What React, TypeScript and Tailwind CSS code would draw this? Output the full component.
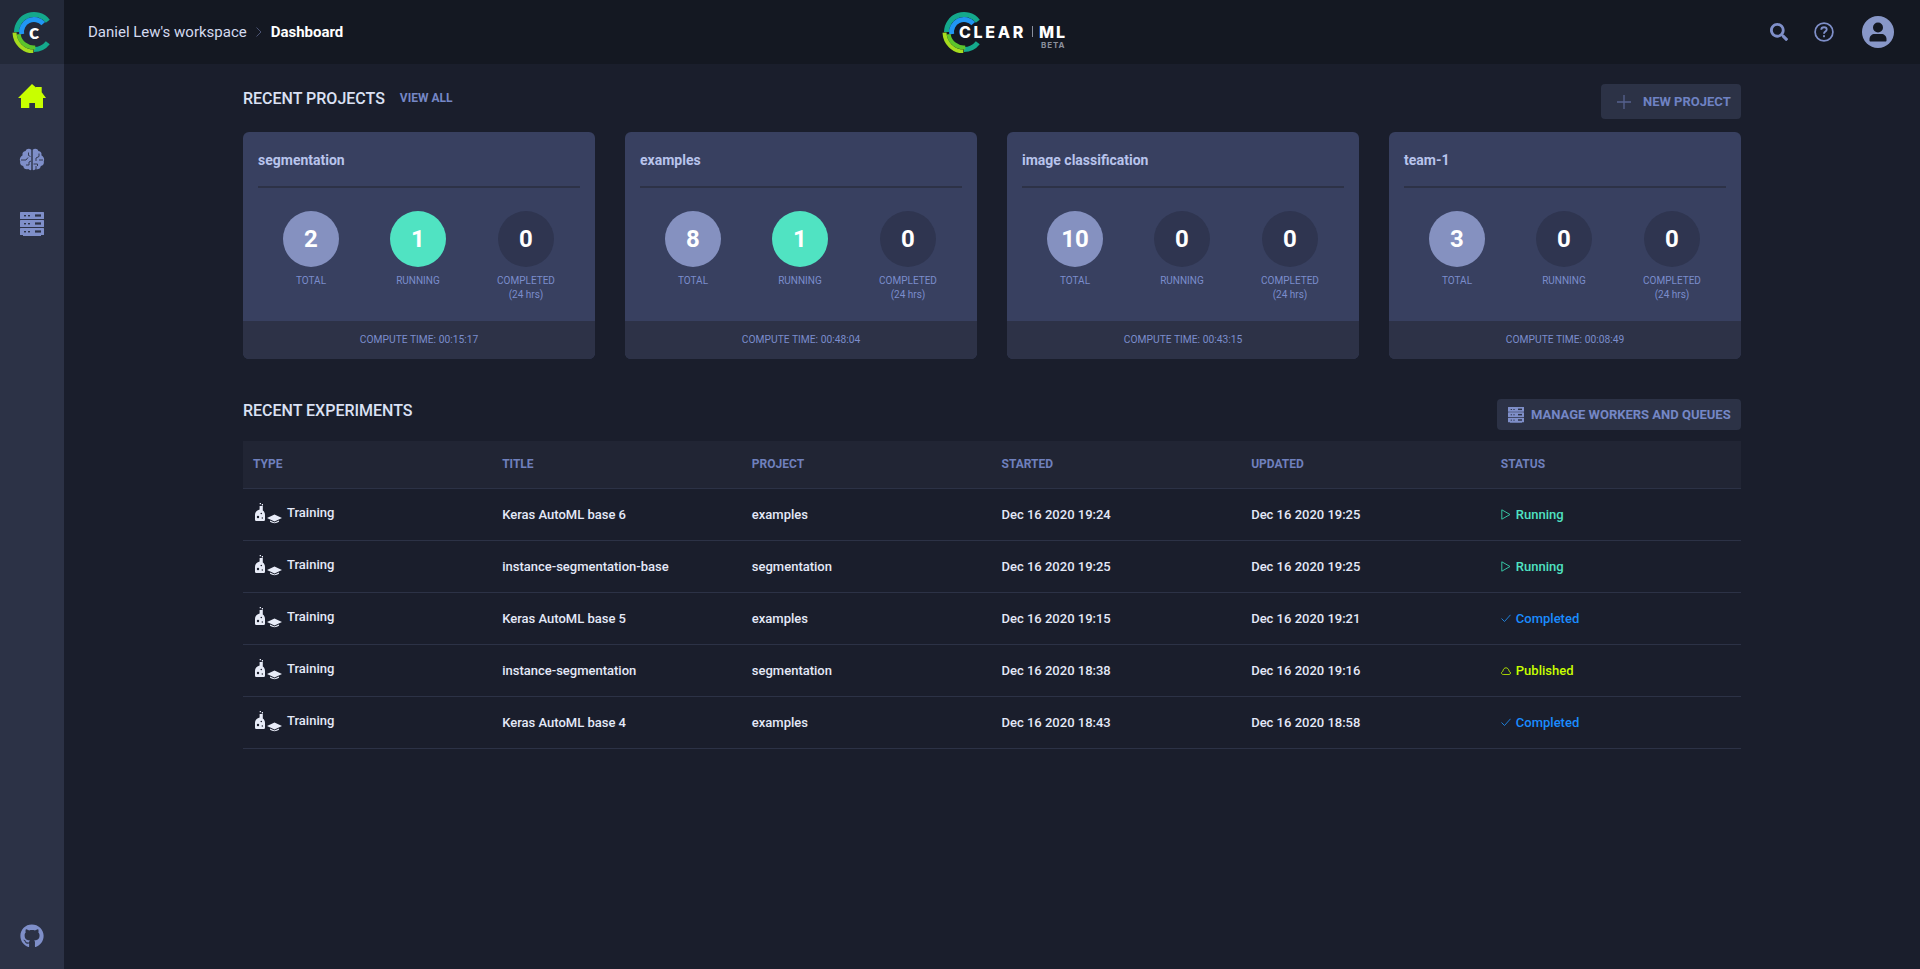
import { FaSearch, FaGithub } from "react-icons/fa";

const polar = (cx: number, cy: number, r: number, deg: number) => {
  const a = (deg * Math.PI) / 180;
  return `${(cx + r * Math.cos(a)).toFixed(2)} ${(cy + r * Math.sin(a)).toFixed(2)}`;
};
const arc = (cx: number, cy: number, r: number, from: number, to: number) =>
  `M${polar(cx, cy, r, from)} A${r} ${r} 0 ${Math.abs(to - from) > 180 ? 1 : 0} ${to > from ? 1 : 0} ${polar(cx, cy, r, to)}`;

function LogoMark({ size = 42 }: { size?: number }) {
  return (
    <svg width={size} height={size} viewBox="0 0 42 42" fill="none">
      <path d={arc(23, 21, 17.5, -38, -180)} stroke="#14a88c" strokeWidth="5" />
      <path d={arc(23, 21, 17.5, 90, 38)} stroke="#14a88c" strokeWidth="5" />
      <path d={arc(23, 21, 12.5, -42, -190)} stroke="#2196f3" strokeWidth="5" />
      <path d={arc(23, 21, 19.5, 178, 92)} stroke="#a6dc1e" strokeWidth="4" />
      <path d={arc(23, 21, 15.5, 172, 85)} stroke="#5cc42c" strokeWidth="4" />
    </svg>
  );
}

function ServerIcon({ w = 24, color = "#7f8fc9", bg = "#2c3246" }: { w?: number; color?: string; bg?: string }) {
  return (
    <svg width={w} height={w} viewBox="0 0 24 24">
      {[0, 8, 16].map((y) => (
        <g key={y}>
          <rect x="0" y={y} width="24" height="7" rx="0.5" fill={color} />
          <rect x="4" y={y + 3} width="2" height="1.4" fill={bg} />
          <rect x="8" y={y + 3} width="2" height="1.4" fill={bg} />
          <rect x="15" y={y + 2.4} width="6" height="2.2" fill={bg} />
        </g>
      ))}
      <rect x="3" y="23" width="18" height="1" fill={color} />
    </svg>
  );
}

function HomeIcon() {
  return (
    <svg width="28" height="24" viewBox="0 0 28 24">
      <path d="M14 0L18 3.500V3H23.700V8.300L28 14H25V24H17V19H11.300V24H3V14H0z" fill="#c8ff00" />
    </svg>
  );
}

function BrainIcon() {
  return (
    <svg width="26" height="24" viewBox="0 0 26 24">
      <path d="M12.300 1.800C10.300 0 7.200 .8 6.600 3 4 3.200 3 5.400 3.600 7.200 1.200 8.600.2 11 1.200 13.400c-.6 2.200.8 4.200 3 4.600.2 2.600 2.800 4 5 3 1.200 1.200 2.400 1.400 3.100.8z" fill="#7f8fc9" />
      <path d="M13.700 1.800c2-1.800 5.100-1 5.700 1.200 2.600.2 3.600 2.400 3 4.200 2.400 1.400 3.400 3.800 2.400 6.200.6 2.200-.8 4.200-3 4.600-.2 2.600-2.800 4-5 3-1.200 1.200-2.400 1.400-3.100.8z" fill="#7f8fc9" />
      <path d="M2 12h5l2-2.500M9.500 4.500v3l2 1M7 17h3v-3l2-1M20 5.500v3l-3 1.500v3M24 12h-4M14.500 16h4v2M17 21v-3" stroke="#2c3246" strokeWidth="0.900" fill="none" />
    </svg>
  );
}

function TrainingIcon() {
  return (
    <svg width="27" height="21" viewBox="0 0 27 21" className="shrink-0">
      <path d="M4.700 0h1.300v1.300H4.700zM6.800 1h1.200v1.500H6.800z" fill="#e8ecf8" />
      <path d="M4.600 3H7.800V7.500C9.300 8.500 10 10 10 12V16.500C10 17.500 9.300 18 8.500 18H1.600C.7 18 0 17.500 0 16.500V12C0 10 1 8.300 2.400 7.600L4.600 6.500z" fill="#e8ecf8" />
      <circle cx="3" cy="14" r="1.200" fill="#1a1e2c" />
      <circle cx="6.300" cy="10.500" r="0.800" fill="#1a1e2c" />
      <circle cx="7.300" cy="15" r="0.700" fill="#1a1e2c" />
      <path d="M12 15l7.500-3.500L27 15l-7.500 3.500z" fill="#e8ecf8" />
      <path d="M15 17.500v1.300c2.500 1.800 6.500 1.800 9 0v-1.300l-4.500 2z" fill="#e8ecf8" />
    </svg>
  );
}

function Sidebar() {
  return (
    <aside className="w-16 shrink-0 bg-[#2c3246] flex flex-col items-center">
      <div className="w-16 h-16 bg-[#232939] flex items-center justify-center relative">
        <LogoMark />
        <span className="absolute left-[29px] top-[20px] text-[21px] leading-[22px] font-black text-white font-['Lato',sans-serif]">c</span>
      </div>
      <div className="mt-[20px] h-[24px] flex"><HomeIcon /></div>
      <div className="mt-[40px] h-[24px] flex"><BrainIcon /></div>
      <div className="mt-[40px] h-[24px] flex"><ServerIcon /></div>
      <div className="mt-auto mb-[21px]"><FaGithub size={24} className="text-[#7f8fc9]" /></div>
    </aside>
  );
}

function Header() {
  return (
    <header className="h-16 bg-[#141822] flex items-center relative pl-6 pr-[26px]">
      <span className="text-[15px] text-[#d4dbf0]">Daniel Lew's workspace</span>
      <svg width="8" height="12" viewBox="0 0 8 12" className="mx-[8px]" fill="none">
        <path d="M1.500 1.500L6 6l-4.500 4.500" stroke="#4a5272" strokeWidth="1" />
      </svg>
      <span className="text-[15px] font-bold text-white">Dashboard</span>

      <div className="absolute left-[877px] top-[11px] w-[130px] h-[44px]">
        <LogoMark />
        <span className="absolute left-[18px] top-[12px] text-[16px] leading-[18px] font-extrabold text-white tracking-[2.700px] font-['Inter',sans-serif]">CLEAR</span>
        <span className="absolute left-[91px] top-[15px] w-px h-[11px] bg-[#8a8f9c]" />
        <span className="absolute left-[98px] top-[12px] text-[16px] leading-[18px] font-extrabold text-white tracking-[2px] font-['Inter',sans-serif]">ML</span>
        <span className="absolute left-[100px] top-[30px] text-[8px] leading-[9px] font-bold text-[#8a8f9c] tracking-[0.900px] font-['Inter',sans-serif]">BETA</span>
      </div>

      <div className="ml-auto flex items-center">
        <FaSearch size={18} className="text-[#7f8fc9]" />
        <svg width="20" height="20" viewBox="0 0 22 22" className="ml-[26px]" fill="none">
          <circle cx="11" cy="11" r="9.800" stroke="#7f8fc9" strokeWidth="1.900" />
          <path d="M8 8.500c0-1.700 1.300-2.700 3-2.700s3 1 3 2.500c0 2.300-3 2.200-3 4.500" stroke="#7f8fc9" strokeWidth="2" />
          <rect x="10" y="14.500" width="2" height="2.200" fill="#7f8fc9" />
        </svg>
        <svg width="32" height="32" viewBox="0 0 32 32" className="ml-[28px]">
          <circle cx="16" cy="16" r="16" fill="#8897c8" />
          <circle cx="16" cy="11.500" r="5" fill="#141822" />
          <path d="M7.500 24.500v-1.500c0-3 2.500-5 5-5h7c2.500 0 5 2 5 5v1.500c0 .6-.5 1-1 1H8.500c-.5 0-1-.4-1-1z" fill="#141822" />
        </svg>
      </div>
    </header>
  );
}

const projects = [
  { name: "segmentation", total: 2, running: 1, completed: 0, time: "00:15:17" },
  { name: "examples", total: 8, running: 1, completed: 0, time: "00:48:04" },
  { name: "image classification", total: 10, running: 0, completed: 0, time: "00:43:15" },
  { name: "team-1", total: 3, running: 0, completed: 0, time: "00:08:49" },
];

function Stat({ value, label, sub, cls, offset }: { value: number; label: string; sub?: string; cls: string; offset?: boolean }) {
  return (
    <div className={`w-[107px] flex flex-col items-center ${offset ? "ml-px" : ""}`}>
      <div className={`w-14 h-14 rounded-full flex items-center justify-center text-white text-[24px] font-bold ${cls}`}>{value}</div>
      <div className="mt-[7px] text-[10px] leading-[14px] text-[#7b8dcc] text-center">
        {label}
        {sub && <div>{sub}</div>}
      </div>
    </div>
  );
}

function ProjectCard({ p }: { p: (typeof projects)[number] }) {
  return (
    <div className="h-[227px] rounded-[6px] overflow-hidden bg-[#384060] flex flex-col">
      <div className="mx-[15px] h-[56px] pt-[18px] border-b-2 border-[#2d3247] text-[14px] leading-[20px] font-bold text-[#b8c4ec]">{p.name}</div>
      <div className="flex-1 flex pl-[14.500px] pt-[23px]">
        <Stat value={p.total} label="TOTAL" cls="bg-[#8591c0]" />
        <Stat value={p.running} label="RUNNING" cls={p.running ? "bg-[#50e3c2]" : "bg-[#2f3550]"} />
        <Stat value={p.completed} label="COMPLETED" sub="(24 hrs)" cls="bg-[#2f3550]" offset />
      </div>
      <div className="h-[38px] bg-[#2d3247] flex items-center justify-center text-[10.250px] text-[#7b8dcc]">COMPUTE TIME: {p.time}</div>
    </div>
  );
}

type Status = "Running" | "Completed" | "Published";
const rows: { title: string; project: string; started: string; updated: string; status: Status }[] = [
  { title: "Keras AutoML base 6", project: "examples", started: "Dec 16 2020 19:24", updated: "Dec 16 2020 19:25", status: "Running" },
  { title: "instance-segmentation-base", project: "segmentation", started: "Dec 16 2020 19:25", updated: "Dec 16 2020 19:25", status: "Running" },
  { title: "Keras AutoML base 5", project: "examples", started: "Dec 16 2020 19:15", updated: "Dec 16 2020 19:21", status: "Completed" },
  { title: "instance-segmentation", project: "segmentation", started: "Dec 16 2020 18:38", updated: "Dec 16 2020 19:16", status: "Published" },
  { title: "Keras AutoML base 4", project: "examples", started: "Dec 16 2020 18:43", updated: "Dec 16 2020 18:58", status: "Completed" },
];

function StatusCell({ s }: { s: Status }) {
  if (s === "Running")
    return (
      <span className="flex items-center text-[#50e3c2]">
        <svg width="10" height="11" viewBox="0 0 10 11" fill="none" className="mr-[5px]"><path d="M.8 .8v9.400L9 5.500z" stroke="#36c2a2" strokeWidth="1" /></svg>
        Running
      </span>
    );
  if (s === "Completed")
    return (
      <span className="flex items-center text-[#1a8cff]">
        <svg width="10" height="9" viewBox="0 0 10 9" fill="none" className="mr-[5px]"><path d="M.5 4.500L3.500 7.500 9.500 .8" stroke="#1e7fd8" strokeWidth="1" /></svg>
        Completed
      </span>
    );
  return (
    <span className="flex items-center text-[#c8ff00]">
      <svg width="10" height="8" viewBox="0 0 10 8" fill="none" className="mr-[5px]"><path d="M2.200 7.500H8C10 7.500 10 4.800 8.200 4.400 7.800 2 6.300 .8 5 .8 3.500 .8 2.200 2 1.800 4.400 0 4.800 0 7.500 2.200 7.500z" stroke="#b4e600" strokeWidth=".9" /></svg>
      Published
    </span>
  );
}

export default function App() {
  return (
    <div className="h-[969px] flex overflow-hidden bg-[#1a1e2c] font-['Roboto',sans-serif]">
      <Sidebar />
      <div className="flex-1 min-w-0 flex flex-col">
        <Header />
        <main className="px-[179px]">
          <div className="h-[68px] flex items-start">
            <h2 className="mt-[25px] text-[16px] leading-[20px] font-medium text-[#dbe1f4]">RECENT PROJECTS</h2>
            <span className="mt-[24px] ml-[15px] text-[12px] leading-[20px] font-bold text-[#7587c6]">VIEW ALL</span>
            <button className="mt-[20px] ml-auto w-[140px] h-[35px] rounded-[4px] bg-[#2c3246] flex items-center pl-[16px] text-[13px] font-bold text-[#6f82c3]">
              <svg width="14" height="14" viewBox="0 0 14 14" className="mr-[12px]"><path d="M7 0v14M0 7h14" stroke="#56628f" strokeWidth="1.300" /></svg>
              NEW PROJECT
            </button>
          </div>
          <div className="grid grid-cols-4 gap-[30px]">
            {projects.map((p) => <ProjectCard key={p.name} p={p} />)}
          </div>
          <div className="h-[82px] flex items-start">
            <h2 className="mt-[42px] text-[16px] leading-[20px] font-medium text-[#dbe1f4]">RECENT EXPERIMENTS</h2>
            <button className="mt-[40px] ml-auto w-[244px] h-[31px] rounded-[4px] bg-[#2c3246] flex items-center pl-[11px] text-[13px] font-bold text-[#7587c6]">
              <span className="mr-[7px] flex"><ServerIcon w={16} /></span>
              MANAGE WORKERS AND QUEUES
            </button>
          </div>
          <div className="grid grid-cols-6 h-[48px] items-center pb-[2px] bg-[#212534] border-b border-[#2c3246] text-[12px] font-bold text-[#6f80bd]">
            <div className="pl-[10px]">TYPE</div>
            {["TITLE", "PROJECT", "STARTED", "UPDATED", "STATUS"].map((h) => (
              <div key={h} className="pl-[9.500px]">{h}</div>
            ))}
          </div>
          {rows.map((r) => (
            <div key={r.title} className="grid grid-cols-6 h-[52px] items-center border-b border-[#2c3246] text-[13px] font-medium text-[#e4e9f8]">
              <div className="pl-[12px] flex items-center -mt-[3px]"><span className="mr-[5px] flex"><TrainingIcon /></span>Training</div>
              <div className="pl-[9.500px]">{r.title}</div>
              <div className="pl-[9.500px]">{r.project}</div>
              <div className="pl-[9.500px]">{r.started}</div>
              <div className="pl-[9.500px]">{r.updated}</div>
              <div className="pl-[9.500px]"><StatusCell s={r.status} /></div>
            </div>
          ))}
        </main>
      </div>
    </div>
  );
}
